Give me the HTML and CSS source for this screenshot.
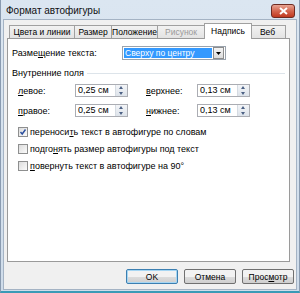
FILE: index.html
```html
<!DOCTYPE html>
<html lang="ru">
<head>
    <meta charset="UTF-8">
    <title>Формат автофигуры</title>
    <link rel="stylesheet" href="styles.css">
</head>
<body>
    <div class="window">
        <!-- Title bar -->
        <div class="titlebar">
            <span class="title">Формат автофигуры</span>
            <div class="close">
                <svg width="9" height="8" viewBox="0 0 9 8">
                    <path d="M1 1 L8 7 M8 1 L1 7" stroke="#fff" stroke-width="2" />
                </svg>
            </div>
        </div>

        <div class="client">
            <!-- Tabs -->
            <div class="tabs">
                <div class="tab t1">Цвета и линии</div>
                <div class="tab t2">Размер</div>
                <div class="tab t3">Положение</div>
                <div class="tab t4 disabled">Рисунок</div>
                <div class="tab t5 active">Надпись</div>
                <div class="tab t6">Веб</div>
            </div>

            <!-- Panel -->
            <div class="panel">
                <div class="row-place">
                    <span class="label-place">Разме<u>щ</u>ение текста:</span>
                    <div class="select">
                        <span class="select-value">Сверху по центру</span>
                        <span class="select-btn">
                            <svg width="5" height="3" viewBox="0 0 5 3"><path d="M0 0 H5 L2.5 3 Z" fill="#000" /></svg>
                        </span>
                    </div>
                </div>

                <div class="group-title">
                    <span>Внутренние поля</span>
                    <span class="line"></span>
                </div>

                <div class="fields">
                    <span class="fl"><u>л</u>евое:</span>
                    <div class="spin"><span class="spin-val">0,25 см</span><span class="spin-btns"><i class="up"></i><i class="down"></i></span></div>
                    <span class="fl fr"><u>в</u>ерхнее:</span>
                    <div class="spin"><span class="spin-val">0,13 см</span><span class="spin-btns"><i class="up"></i><i class="down"></i></span></div>

                    <span class="fl"><u>п</u>равое:</span>
                    <div class="spin"><span class="spin-val">0,25 см</span><span class="spin-btns"><i class="up"></i><i class="down"></i></span></div>
                    <span class="fl fr"><u>н</u>ижнее:</span>
                    <div class="spin"><span class="spin-val">0,13 см</span><span class="spin-btns"><i class="up"></i><i class="down"></i></span></div>
                </div>

                <div class="checks">
                    <div class="check">
                        <span class="box checked">
                            <svg width="8" height="8" viewBox="0 0 8 8"><path d="M1.5 4 L3.2 6 L6.5 1.5" stroke="#2b4f9e" stroke-width="1.4" fill="none" /></svg>
                        </span>
                        <span>переноси<u>т</u>ь текст в автофигуре по словам</span>
                    </div>
                    <div class="check">
                        <span class="box"></span>
                        <span>подго<u>н</u>ять размер автофигуры под текст</span>
                    </div>
                    <div class="check">
                        <span class="box"></span>
                        <span><u>п</u>овернуть текст в автофигуре на 90°</span>
                    </div>
                </div>
            </div>

            <!-- Buttons -->
            <div class="buttons">
                <button class="btn default">OK</button>
                <button class="btn">Отмена</button>
                <button class="btn">Прос<u>м</u>отр</button>
            </div>
        </div>
    </div>
</body>
</html>
```

FILE: styles.css
```css
/* General Styles */
body {
    margin: 0;
    font-family: 'Liberation Sans', Arial, sans-serif;
    font-size: 9px;
    color: #000;
    background: #fff;
}

u {
    text-decoration-thickness: 1px;
    text-underline-offset: 1px;
}

.window {
    width: 300px;
    height: 293px;
    box-sizing: border-box;
    display: flex;
    flex-direction: column;
    background: linear-gradient(to bottom, #dbe6f1, #cfdcea);
    border-left: 1px solid #8a9bb0;
    border-right: 1px solid #8a9bb0;
    border-bottom: 2px solid #3a9ab6;
    padding: 0 2px 1px 2px;
}

/* Title bar */
.titlebar {
    height: 19px;
    display: flex;
    align-items: flex-start;
}

.title {
    font-size: 10px;
    padding: 5px 0 0 3px;
    color: #111;
}

.close {
    margin-left: auto;
    margin-top: 4px;
    margin-right: 2px;
    width: 22px;
    height: 12px;
    border: 1px solid #6e2b22;
    border-radius: 3px;
    background: linear-gradient(to bottom, #e8a493, #d4664f 50%, #c0391f);
    display: flex;
    align-items: center;
    justify-content: center;
}

/* Client area */
.client {
    flex: 1;
    background: #f0f0f0;
    border: 1px solid #a4b3c4;
    display: flex;
    flex-direction: column;
    padding: 4px 6px 0 3px;
}

.tabs {
    display: flex;
    height: 14px;
    align-items: flex-end;
    padding-left: 2px;
    position: relative;
    z-index: 1;
}

.tab {
    box-sizing: border-box;
    height: 13px;
    border: 1px solid #a0a0a0;
    border-bottom: none;
    border-left: none;
    background: linear-gradient(to bottom, #f2f2f2, #e3e3e3);
    text-align: center;
    line-height: 12px;
    font-size: 8.5px;
}

.tab.t1 {
    border-left: 1px solid #a0a0a0;
    width: 66px;
}

.t2 { width: 37px; }
.t3 { width: 46px; }
.t4 { width: 47px; }
.t5 { width: 48px; }
.t6 { width: 36px; }

.tab.disabled {
    color: #9a9a9a;
}

.tab.active {
    height: 16px;
    background: #fff;
    border-left: 1px solid #a0a0a0;
    margin-left: -1px;
    margin-right: -2px;
    margin-bottom: -1px;
    line-height: 14px;
    z-index: 2;
}

.panel {
    height: 224px;
    box-sizing: border-box;
    background: #fff;
    border: 1px solid #9a9a9a;
    padding: 7px 4px 0 4px;
}

.row-place {
    display: flex;
    align-items: center;
    height: 14px;
}

.label-place {
    width: 110px;
}

.select {
    box-sizing: border-box;
    width: 104px;
    height: 14px;
    border: 1px solid #9aa3ad;
    display: flex;
    padding: 1px;
}

.select-value {
    flex: 1;
    background: #3399ff;
    color: #fff;
    line-height: 10px;
    padding-left: 1px;
    font-size: 8.5px;
}

.select-btn {
    width: 11px;
    margin-left: 1px;
    border: 1px solid #8d8d8d;
    box-sizing: border-box;
    background: linear-gradient(to bottom, #f4f4f4, #dcdcdc);
    display: flex;
    align-items: center;
    justify-content: center;
    margin-top: -1px;
    margin-bottom: -1px;
}

.group-title {
    display: flex;
    align-items: center;
    margin-top: 8px;
    gap: 3px;
}

.group-title .line {
    flex: 1;
    border-top: 1px solid #dde4ea;
}

.fields {
    display: grid;
    grid-template-columns: 57px 53px 69px 53px;
    row-gap: 7px;
    align-items: center;
    margin-top: 6px;
    padding-left: 6px;
}

.fl.fr {
    padding-left: 18px;
}

.spin {
    box-sizing: border-box;
    width: 53px;
    height: 13px;
    border: 1px solid #abadb3;
    display: flex;
}

.spin-val {
    flex: 1;
    padding-left: 2px;
    line-height: 11px;
}

.spin-btns {
    width: 11px;
    display: flex;
    flex-direction: column;
    background: linear-gradient(to bottom, #f3f5f8, #dde3ea);
    border-left: 1px solid #d5dbe2;
}

.spin-btns i {
    flex: 1;
    position: relative;
}

.spin-btns i::after {
    content: "";
    position: absolute;
    left: 3px;
    top: 1px;
    border-left: 2.5px solid transparent;
    border-right: 2.5px solid transparent;
}

.spin-btns .up::after {
    border-bottom: 3px solid #4d6185;
}

.spin-btns .down::after {
    border-top: 3px solid #4d6185;
    top: 1px;
}

.checks {
    margin-top: 10px;
    padding-left: 6px;
    display: flex;
    flex-direction: column;
    gap: 7px;
}

.check {
    display: flex;
    align-items: center;
    gap: 2px;
    height: 10px;
}

.box {
    box-sizing: border-box;
    width: 10px;
    height: 10px;
    border: 1px solid #8e8f8f;
    background: linear-gradient(135deg, #dcdcdc, #fbfbfb);
    display: flex;
    align-items: center;
    justify-content: center;
}

/* Buttons */
.buttons {
    display: flex;
    justify-content: flex-end;
    gap: 6px;
    margin-top: 7px;
    margin-right: -4px;
}

.btn {
    box-sizing: border-box;
    width: 52px;
    height: 15px;
    padding: 0;
    font-family: 'Liberation Sans', Arial, sans-serif;
    font-size: 8.5px;
    border: 1px solid #707070;
    border-radius: 2px;
    background: linear-gradient(to bottom, #f2f2f2 50%, #dddddd 50%, #cfcfcf);
    color: #000;
}

.btn.default {
    border-color: #3c7fb1;
    box-shadow: inset 0 0 0 1px #a6d6f3;
}
```
